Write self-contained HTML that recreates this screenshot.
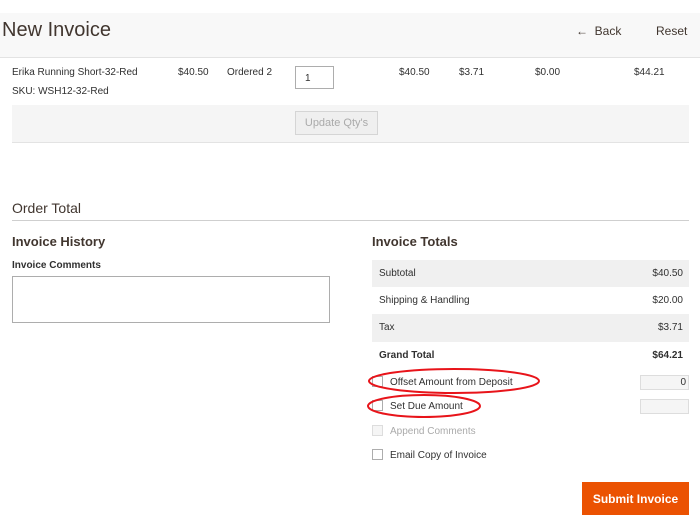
<!DOCTYPE html>
<html><head><meta charset="utf-8"><style>
*{margin:0;padding:0;box-sizing:border-box}
body{width:700px;height:527px;background:#fff;font-family:"Liberation Sans",sans-serif;color:#303030;position:relative;overflow:hidden;font-size:10px}
.a{position:absolute;white-space:nowrap}
.cb{position:absolute;width:11px;height:11px;border:1px solid #adadad;background:#fff}
</style></head><body>
<div class="a" style="left:0;top:13px;width:700px;height:45px;background:#f8f8f8;border-bottom:1px solid #e3e3e3"></div>
<div class="a" style="left:2px;top:19px;font-size:20px;color:#41362f">New Invoice</div>
<div class="a" style="left:576px;top:24px;font-size:12px;color:#41362f">&#8592;&nbsp; Back</div>
<div class="a" style="left:656px;top:24px;font-size:12px;color:#41362f">Reset</div>

<div class="a" style="left:12px;top:67px">Erika Running Short-32-Red</div>
<div class="a" style="left:12px;top:86px">SKU: WSH12-32-Red</div>
<div class="a" style="left:178px;top:67px">$40.50</div>
<div class="a" style="left:227px;top:67px">Ordered 2</div>
<div class="a" style="left:295px;top:66px;width:39px;height:23px;border:1px solid #adadad;padding:6px 0 0 9px;color:#303030">1</div>
<div class="a" style="left:399px;top:67px">$40.50</div>
<div class="a" style="left:459px;top:67px">$3.71</div>
<div class="a" style="left:535px;top:67px">$0.00</div>
<div class="a" style="left:634px;top:67px">$44.21</div>
<div class="a" style="left:12px;top:105px;width:677px;height:38px;background:#f5f5f5;border-bottom:1px solid #e3e3e3"></div>
<div class="a" style="left:295px;top:111px;width:83px;height:24px;background:#efefef;border:1px solid #d5d5d5;color:#aaa;font-size:11px;text-align:center;padding-top:5px">Update Qty's</div>

<div class="a" style="left:12px;top:200px;font-size:14px;color:#41362f">Order Total</div>
<div class="a" style="left:12px;top:220px;width:677px;height:1px;background:#cfcfcf"></div>
<div class="a" style="left:12px;top:234px;font-size:13px;font-weight:bold;color:#41362f">Invoice History</div>
<div class="a" style="left:12px;top:260px;font-weight:bold">Invoice Comments</div>
<div class="a" style="left:12px;top:276px;width:318px;height:47px;border:1px solid #adadad"></div>

<div class="a" style="left:372px;top:234px;font-size:13px;font-weight:bold;color:#41362f">Invoice Totals</div>
<div class="a" style="left:372px;top:260px;width:317px;height:27px;background:#f0f0f0"></div>
<div class="a" style="left:372px;top:314px;width:317px;height:28px;background:#f0f0f0"></div>
<div class="a" style="left:379px;top:268px">Subtotal</div><div class="a" style="right:17px;top:268px">$40.50</div>
<div class="a" style="left:379px;top:295px">Shipping &amp; Handling</div><div class="a" style="right:17px;top:295px">$20.00</div>
<div class="a" style="left:379px;top:322px">Tax</div><div class="a" style="right:17px;top:322px">$3.71</div>
<div class="a" style="left:379px;top:350px;font-weight:bold">Grand Total</div><div class="a" style="right:17px;top:350px;font-weight:bold">$64.21</div>

<div class="cb" style="left:372px;top:376px"></div>
<div class="a" style="left:390px;top:377px">Offset Amount from Deposit</div>
<div class="a" style="left:640px;top:375px;width:49px;height:15px;background:#f5f5f5;border:1px solid #ddd;text-align:right;padding:1px 2px 0 0">0</div>
<div class="cb" style="left:372px;top:400px"></div>
<div class="a" style="left:390px;top:401px">Set Due Amount</div>
<div class="a" style="left:640px;top:399px;width:49px;height:15px;background:#f5f5f5;border:1px solid #ddd"></div>
<svg class="a" style="left:362px;top:360px" width="185" height="62"><ellipse cx="92" cy="21" rx="85" ry="12" fill="none" stroke="#e8141a" stroke-width="2"/><ellipse cx="62" cy="46" rx="56" ry="11" fill="none" stroke="#e8141a" stroke-width="2"/></svg>
<div class="cb" style="left:372px;top:425px;border-color:#ddd;background:#f5f5f5"></div>
<div class="a" style="left:390px;top:426px;color:#aaa">Append Comments</div>
<div class="cb" style="left:372px;top:449px"></div>
<div class="a" style="left:390px;top:450px">Email Copy of Invoice</div>
<div class="a" style="left:582px;top:482px;width:107px;height:33px;background:#eb5202;color:#fff;font-weight:bold;font-size:12px;text-align:center;padding-top:10px">Submit Invoice</div>
</body></html>
